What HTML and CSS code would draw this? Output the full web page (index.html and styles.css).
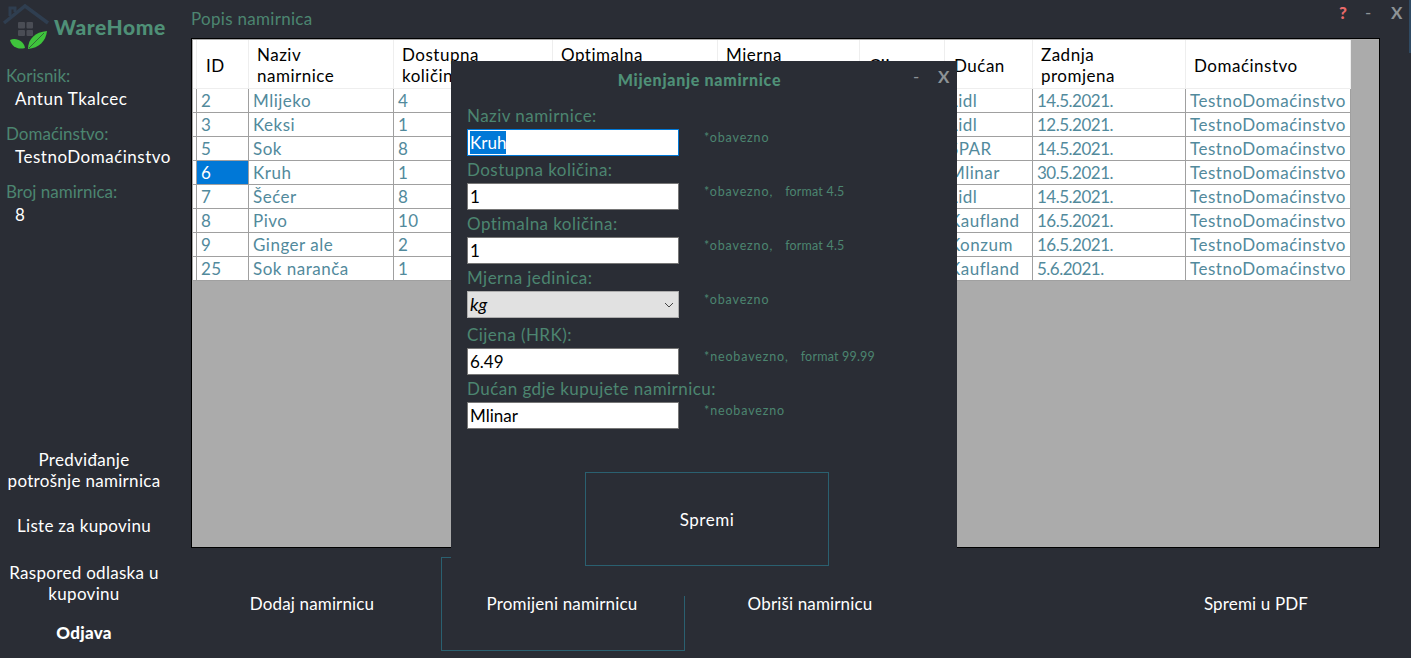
FILE: index.html
```html
<!DOCTYPE html>
<html lang="hr">

<head>
    <meta charset="UTF-8">
    <meta name="viewport" content="width=device-width, initial-scale=1.0">
    <title>WareHome</title>
    <link rel="stylesheet" href="styles.css">
</head>

<body>

    <div id="app">
        <aside class="sidebar">
            <div class="logo">
                <svg class="logo-icon" width="52" height="52" viewBox="0 0 52 52">
                    <path d="M4 23 L25 6 L48 23" fill="none" stroke="#2f3e50" stroke-width="3.5"/>
                    <path d="M10 16 V8 H15 V12" fill="none" stroke="#2f3e50" stroke-width="3"/>
                    <rect x="18" y="22" width="7" height="6.5" rx="1" fill="#4a4d55"/>
                    <rect x="26.500" y="22" width="6.500" height="6.500" rx="1" fill="#4a4d55"/>
                    <rect x="18" y="30" width="7" height="6" rx="1" fill="#4a4d55"/>
                    <rect x="26.500" y="30" width="6.500" height="6" rx="1" fill="#4a4d55"/>
                    <path d="M10 40 C16 37 24 41 25 48 C18 50 12 47 10 40 Z" fill="#3fc43c"/>
                    <path d="M47 31 C46 41 39 48 28 49 C28 39 35 32 47 31 Z" fill="#3fc43c"/>
                    <path d="M29 48 L44 33" stroke="#2a2d35" stroke-width="0.6"/>
                </svg>
                <span class="logo-text">WareHome</span>
            </div>

            <div class="info">
                <div class="info-label">Korisnik:</div>
                <div class="info-value">Antun Tkalcec</div>
                <div class="info-label">Domaćinstvo:</div>
                <div class="info-value">TestnoDomaćinstvo</div>
                <div class="info-label">Broj namirnica:</div>
                <div class="info-value">8</div>
            </div>

            <nav class="side-nav">
                <button type="button" class="side-btn btn-predict">Predviđanje<br>potrošnje namirnica</button>
                <button type="button" class="side-btn btn-lists">Liste za kupovinu</button>
                <button type="button" class="side-btn btn-plan">Raspored odlaska u<br>kupovinu</button>
                <button type="button" class="side-btn btn-logout">Odjava</button>
            </nav>
        </aside>

        <main class="main">
            <header class="main-head">
                <span class="main-title">Popis namirnica</span>
                <div class="win-controls">
                    <span class="win-help">?</span>
                    <span class="win-min">-</span>
                    <span class="win-close">X</span>
                </div>
            </header>

            <div class="table-frame">
                <table class="grid">
                    <colgroup>
                        <col class="c-head"><col class="c-id"><col class="c-name"><col class="c-avail">
                        <col class="c-opt"><col class="c-unit"><col class="c-price"><col class="c-shop">
                        <col class="c-date"><col class="c-home">
                    </colgroup>
                    <thead>
                        <tr>
                            <th></th>
                            <th class="th-id">ID</th>
                            <th>Naziv<br>namirnice</th>
                            <th>Dostupna<br>količina</th>
                            <th>Optimalna<br>količina</th>
                            <th>Mjerna<br>jedinica</th>
                            <th class="th-price">Cijena</th>
                            <th class="th-shop">Dućan</th>
                            <th>Zadnja<br>promjena</th>
                            <th>Domaćinstvo</th>
                        </tr>
                    </thead>
                    <tbody>
                        <tr><td></td><td>2</td><td>Mlijeko</td><td>4</td><td>2</td><td>l</td><td>7.99</td><td>Lidl</td><td class="td-date">14.5.2021.</td><td>TestnoDomaćinstvo</td></tr>
                        <tr><td></td><td>3</td><td>Keksi</td><td>1</td><td>1</td><td>kom</td><td>9.99</td><td>Lidl</td><td class="td-date">12.5.2021.</td><td>TestnoDomaćinstvo</td></tr>
                        <tr><td></td><td>5</td><td>Sok</td><td>8</td><td>4</td><td>l</td><td>8.49</td><td>SPAR</td><td class="td-date">14.5.2021.</td><td>TestnoDomaćinstvo</td></tr>
                        <tr><td></td><td class="cell-selected">6</td><td>Kruh</td><td>1</td><td>1</td><td>kg</td><td>6.49</td><td>Mlinar</td><td class="td-date">30.5.2021.</td><td>TestnoDomaćinstvo</td></tr>
                        <tr><td></td><td>7</td><td>Šećer</td><td>8</td><td>2</td><td>kg</td><td>5.99</td><td>Lidl</td><td class="td-date">14.5.2021.</td><td>TestnoDomaćinstvo</td></tr>
                        <tr><td></td><td>8</td><td>Pivo</td><td>10</td><td>6</td><td>l</td><td>6.99</td><td>Kaufland</td><td class="td-date">16.5.2021.</td><td>TestnoDomaćinstvo</td></tr>
                        <tr><td></td><td>9</td><td>Ginger ale</td><td>2</td><td>2</td><td>l</td><td>9.49</td><td>Konzum</td><td class="td-date">16.5.2021.</td><td>TestnoDomaćinstvo</td></tr>
                        <tr><td></td><td>25</td><td>Sok naranča</td><td>1</td><td>1</td><td>l</td><td>8.99</td><td>Kaufland</td><td class="td-date">5.6.2021.</td><td>TestnoDomaćinstvo</td></tr>
                    </tbody>
                </table>
            </div>

            <div class="actions">
                <button type="button" class="action-btn">Dodaj namirnicu</button>
                <button type="button" class="action-btn action-active">Promijeni namirnicu</button>
                <button type="button" class="action-btn action-delete">Obriši namirnicu</button>
                <button type="button" class="action-btn action-pdf">Spremi u PDF</button>
            </div>
        </main>

        <!-- edge of the window behind -->
        <div class="back-sliver"></div>

        <section class="dialog">
            <header class="dialog-head">
                <h2 class="dialog-title">Mijenjanje namirnice</h2>
                <span class="dialog-min">-</span>
                <span class="dialog-close">X</span>
            </header>

            <form class="dialog-form">
                <div class="field">
                    <label class="field-label">Naziv namirnice:</label>
                    <div class="input input-focus"><span class="input-selection">Kruh</span></div>
                    <span class="hint">*obavezno</span>
                </div>
                <div class="field">
                    <label class="field-label" for="avail">Dostupna količina:</label>
                    <input class="input" id="avail" type="text" value="1">
                    <span class="hint">*obavezno, <span class="hint-format">format 4.5</span></span>
                </div>
                <div class="field">
                    <label class="field-label" for="optimal">Optimalna količina:</label>
                    <input class="input" id="optimal" type="text" value="1">
                    <span class="hint">*obavezno, <span class="hint-format">format 4.5</span></span>
                </div>
                <div class="field">
                    <label class="field-label" for="unit">Mjerna jedinica:</label>
                    <div class="select-wrap">
                        <select class="input select" id="unit">
                            <option>kg</option>
                            <option>l</option>
                            <option>kom</option>
                        </select>
                        <svg class="select-arrow" width="10" height="6" viewBox="0 0 10 6">
                            <path d="M1 1 L5 5 L9 1" fill="none" stroke="#444" stroke-width="1"/>
                        </svg>
                    </div>
                    <span class="hint">*obavezno</span>
                </div>
                <div class="field field-price">
                    <label class="field-label" for="price">Cijena (HRK):</label>
                    <input class="input" id="price" type="text" value="6.49">
                    <span class="hint">*neobavezno, <span class="hint-format">format 99.99</span></span>
                </div>
                <div class="field">
                    <label class="field-label" for="shop">Dućan gdje kupujete namirnicu:</label>
                    <input class="input" id="shop" type="text" value="Mlinar">
                    <span class="hint">*neobavezno</span>
                </div>
                <button type="button" class="save-btn">Spremi</button>
            </form>
        </section>
    </div>

</body>

</html>
```

FILE: styles.css
```css
* {
    box-sizing: border-box;
}

body {
    margin: 0;
    background-color: #2a2d35;
    font-family: "Lato", "Open Sans", sans-serif;
    font-size: 17px;
    letter-spacing: 0.5px;
    color: #fff;
    overflow: hidden;
}

button,
input,
select {
    font: inherit;
    letter-spacing: inherit;
}

button {
    background: none;
    border: none;
    color: #fff;
    padding: 0;
}

#app {
    position: relative;
    display: flex;
    width: 1411px;
    height: 658px;
}

/* sidebar */
.sidebar {
    display: flex;
    flex-direction: column;
    width: 191px;
    flex-shrink: 0;
}

.logo {
    display: flex;
    align-items: flex-start;
    height: 52px;
    margin-bottom: 12px;
}

.logo-icon {
    flex-shrink: 0;
}

.logo-text {
    margin: 14px 0 0 2px;
    font-size: 21px;
    font-weight: 900;
    letter-spacing: 0.55px;
    color: #4f9077;
}

.info {
    padding-left: 6px;
}

.info-label {
    height: 24px;
    line-height: 24px;
    letter-spacing: 0;
    color: #4c8570;
}

.info-value {
    height: 34px;
    line-height: 22px;
    padding-left: 9px;
}

.side-nav {
    display: flex;
    flex-direction: column;
    width: 168px;
    margin-top: 211px;
}

.side-btn {
    line-height: 21px;
    letter-spacing: 0.3px;
    text-align: center;
}

.btn-lists {
    margin-top: 24px;
}

.btn-plan {
    margin-top: 26px;
}

.btn-logout {
    margin-top: 18px;
    font-weight: 900;
}

/* main */
.main {
    display: flex;
    flex-direction: column;
    flex: 1;
}

.main-head {
    display: flex;
    justify-content: space-between;
    height: 38px;
}

.main-title {
    margin-top: 7px;
    line-height: 24px;
    letter-spacing: 0.3px;
    color: #4c8570;
}

.win-controls {
    display: flex;
    align-items: flex-start;
    margin-top: 2px;
    color: #8d9396;
}

.win-help {
    width: 26px;
    font-weight: 900;
    color: #e96a6a;
}

.win-min {
    width: 26px;
}

.win-close {
    width: 20px;
    font-weight: 700;
}

.table-frame {
    width: 1189px;
    height: 510px;
    padding: 1px 0 0 1px;
    background-color: #ababab;
    border: 1px solid #000;
}

.grid {
    table-layout: fixed;
    width: 1158px;
    border-collapse: separate;
    border-spacing: 0;
}

.c-head { width: 4px; }
.c-id { width: 52px; }
.c-name { width: 145px; }
.c-avail { width: 159px; }
.c-opt { width: 165px; }
.c-unit { width: 142px; }
.c-price { width: 85px; }
.c-shop { width: 88px; }
.c-date { width: 153px; }
.c-home { width: 165px; }

.grid th {
    height: 49px;
    padding: 2px 8px 0;
    line-height: 21px;
    font-weight: 400;
    text-align: left;
    color: #000;
    background-color: #fff;
    border-right: 1px solid #eee;
    border-bottom: 1px solid #eee;
}

.grid .th-id {
    padding-left: 9px;
}

.grid .th-price,
.grid .th-shop {
    padding-left: 9px;
}

.grid td {
    height: 24px;
    padding: 0 4px;
    line-height: 23px;
    white-space: nowrap;
    overflow: hidden;
    color: #528a9c;
    background-color: #fff;
    border-right: 1px solid #a0a0a0;
    border-bottom: 1px solid #a0a0a0;
}

.grid td.td-date {
    letter-spacing: -0.5px;
}

.grid td.cell-selected {
    color: #fff;
    background-color: #0078d7;
}

.actions {
    display: flex;
    gap: 6px;
    margin-top: 9px;
}

.action-btn {
    width: 244px;
    height: 94px;
    padding: 0 2px 2px 0;
    letter-spacing: 0.15px;
    border: 1px solid transparent;
}

.action-active {
    border-color: #2a6070;
}

.action-delete {
    margin-left: -2px;
}

.action-pdf {
    margin-left: auto;
    margin-right: 32px;
}

.back-sliver {
    position: absolute;
    top: 0;
    right: 0;
    width: 2px;
    height: 53px;
    background-color: #2f4a63;
}

/* dialog */
.dialog {
    position: absolute;
    left: 451px;
    top: 61px;
    width: 506px;
    height: 535px;
    background-color: #2a2d35;
}

.dialog-head {
    position: relative;
    height: 44px;
}

.dialog-title {
    margin: 0;
    padding: 9px 9px 0 0;
    font-size: 16px;
    font-weight: 900;
    line-height: 20px;
    letter-spacing: 0.7px;
    text-align: center;
    color: #4f9077;
}

.dialog-min,
.dialog-close {
    position: absolute;
    top: 5px;
    color: #8d9396;
}

.dialog-min {
    left: 462px;
}

.dialog-close {
    left: 487px;
    font-weight: 700;
}

.dialog-form {
    padding-left: 16px;
}

.field {
    display: grid;
    grid-template-columns: 212px auto;
    grid-template-rows: 24px 27px;
    column-gap: 25px;
    margin-bottom: 3px;
}

.field-price {
    margin-top: 6px;
}

.field-label {
    grid-column: 1 / 3;
    line-height: 22px;
    letter-spacing: 0.45px;
    color: #4c8570;
}

.input {
    width: 212px;
    height: 27px;
    padding: 0 2px;
    line-height: 25px;
    letter-spacing: 0;
    color: #000;
    background-color: #fff;
    border: 1px solid #767676;
    border-radius: 0;
    outline: none;
}

.input-focus {
    border-color: #0078d7;
}

.input-selection {
    display: inline-block;
    height: 23px;
    line-height: 23px;
    margin-top: 1px;
    color: #fff;
    background-color: #0078d7;
}

.select-wrap {
    position: relative;
    width: 212px;
}

.select {
    appearance: none;
    font-size: 18px;
    font-style: italic;
    background-color: #e1e1e1;
    border-color: #adadad;
}

.select-arrow {
    position: absolute;
    right: 5px;
    top: 11px;
}

.hint {
    padding-bottom: 11px;
    align-self: center;
    font-size: 12.5px;
    letter-spacing: 0.85px;
    color: #4c8570;
}

.hint-format {
    margin-left: 8px;
    letter-spacing: 0.2px;
}

.save-btn {
    display: block;
    width: 244px;
    height: 94px;
    margin: 43px 0 0 118px;
    border: 1px solid #2a6070;
}
```
